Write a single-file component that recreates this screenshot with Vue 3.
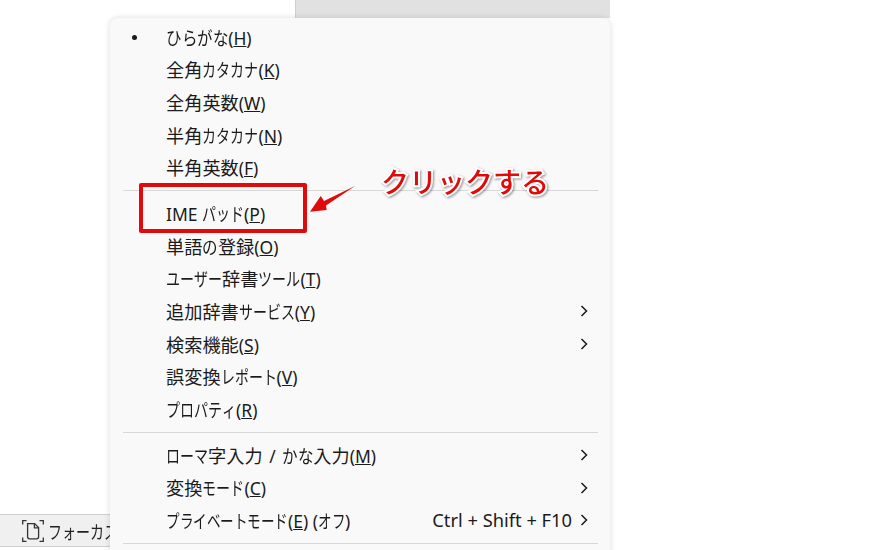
<script setup>
const groups = [
  [
    { label: 'ひらがな', key: 'H', dot: true },
    { label: '全角カタカナ', key: 'K' },
    { label: '全角英数', key: 'W' },
    { label: '半角カタカナ', key: 'N' },
    { label: '半角英数', key: 'F' },
  ],
  [
    { label: 'IME パッド', key: 'P' },
    { label: '単語の登録', key: 'O' },
    { label: 'ユーザー辞書ツール', key: 'T' },
    { label: '追加辞書サービス', key: 'Y', sub: true },
    { label: '検索機能', key: 'S', sub: true },
    { label: '誤変換レポート', key: 'V' },
    { label: 'プロパティ', key: 'R' },
  ],
  [
    { label: 'ローマ字入力 / かな入力', key: 'M', sub: true, cls: 'wide' },
    { label: '変換モード', key: 'C', sub: true },
    { label: 'プライベートモード', key: 'E', tail: ' (オフ)', hint: 'Ctrl + Shift + F10', sub: true, cls: 'tight' },
  ],
]

// The reference font draws kana narrower than kanji, so each kana is its own condensed box.
function tokens(text) {
  return (text.match(/[\u30a0-\u30ff]|[\u3040-\u309f]|[\u4e00-\u9fff]+|[^\u3040-\u30ff\u4e00-\u9fff]+/g) || []).map((t) => {
    let cls = 'lat'
    if (/[\u30a0-\u30ff]/.test(t)) cls = 'kata'
    else if (/[\u3040-\u309f]/.test(t)) cls = 'hira'
    else if (/[\u4e00-\u9fff]/.test(t)) cls = 'kan'
    return { t, cls }
  })
}
</script>

<template>
  <div class="stage">
    <div class="top-band"></div>
    <div class="status-bar">
      <svg class="focus-icon" width="22" height="22" viewBox="0 0 22 22" fill="none" stroke="#333" stroke-width="1.3">
        <path d="M.7 4.5V.7h3.8M17.5.7h3.8v3.8M.7 17.5v3.8h3.8M17.5 21.3h3.8v-3.8" />
        <path d="M5.6 3.6h7l4 4v9.2a2 2 0 0 1-2 2H7.600a2 2 0 0 1-2-2z" />
        <path d="M12.400 3.600v4.200h4.200" />
      </svg>
      <span class="status-text"><span v-for="(s, i) in tokens('フォーカス')" :key="i" :class="s.cls">{{ s.t }}</span></span>
    </div>

    <div class="menu">
      <template v-for="(group, g) in groups" :key="g">
        <div v-for="item in group" :key="item.key" class="row" :class="item.cls">
          <span class="mark"><i v-if="item.dot" class="dot"></i></span>
          <span class="label"><span v-for="(s, i) in tokens(item.label)" :key="i" :class="s.cls">{{ s.t }}</span>(<u>{{ item.key }}</u>)<span v-for="(s, i) in tokens(item.tail || '')" :key="'t' + i" :class="s.cls">{{ s.t }}</span></span>
          <span v-if="item.hint" class="hint">{{ item.hint }}</span>
          <svg v-if="item.sub" class="chev" width="8" height="12" viewBox="0 0 8 12" fill="none" stroke="#1a1a1a" stroke-width="1.5">
            <path d="M1.500 1 6.500 6 1.500 11" />
          </svg>
        </div>
        <div class="sep-wrap"><div class="sep"></div></div>
      </template>
    </div>

    <div class="highlight"></div>
    <svg class="arrow" width="50" height="30" viewBox="0 0 50 30">
      <path d="M1 27.700 11.700 12 15 17 46 2 17 21.500 17.700 26z" fill="#e00a0a" />
    </svg>
    <div class="callout">クリックする</div>
  </div>
</template>

<style scoped>
.stage {
  position: relative;
  width: 879px;
  height: 550px;
  overflow: hidden;
  background: #fff;
  font-family: "Noto Sans", "Noto Sans CJK JP", sans-serif;
}
.top-band {
  position: absolute;
  left: 295px;
  top: 0;
  width: 315px;
  height: 18px;
  background: #e1e1e1;
  border-left: 1px solid #cfcfcf;
  box-sizing: border-box;
}
.status-bar {
  position: absolute;
  left: 0;
  top: 514px;
  width: 112px;
  height: 33px;
  display: flex;
  align-items: center;
  padding-left: 22px;
  box-sizing: border-box;
  overflow: hidden;
  background: #f0f0f0;
  border-top: 1px solid #d0d0d0;
  border-bottom: 1px solid #d0d0d0;
  white-space: nowrap;
  font-size: 17.5px;
}
.focus-icon {
  flex: none;
}
.status-text {
  color: #222;
  margin-left: 4px;
}
.menu {
  position: absolute;
  left: 110px;
  top: 18px;
  width: 500px;
  height: 540px;
  box-sizing: border-box;
  padding: 3px 12px 0 13px;
  background: #f9f9f9;
  border-radius: 8px 8px 0 0;
  box-shadow: 0 0 6px rgba(0, 0, 0, 0.14);
}
.row {
  height: 32.6px;
  display: flex;
  align-items: center;
  font-size: 17.5px;
  color: #1b1b1b;
  white-space: pre;
}
.wide {
  word-spacing: 2px;
}
.kan {
  font-size: 18.2px;
}
.kata,
.hira {
  display: inline-block;
  font-size: 18.5px;
  width: 0.757em;
  transform: scaleX(0.757);
  transform-origin: 0 50%;
}
.hira {
  width: 0.84em;
  transform: scaleX(0.84);
}
.tight .kata {
  width: 0.733em;
  transform: scaleX(0.733);
}
.mark {
  width: 43px;
  flex: none;
  display: flex;
  padding-left: 8.500px;
  box-sizing: border-box;
}
.dot {
  width: 5px;
  height: 5px;
  border-radius: 50%;
  background: #1b1b1b;
}
.label {
  flex: 1;
  margin-top: -1px;
}
.hint {
  font-size: 18.3px;
  margin-top: -1px;
  margin-right: 8px;
}
.chev {
  margin-right: 10px;
}
.sep-wrap {
  height: 13.4px;
  display: flex;
  align-items: center;
}
.sep {
  flex: 1;
  height: 1px;
  background: #d8d8d8;
}
.highlight {
  position: absolute;
  left: 139px;
  top: 183px;
  width: 168px;
  height: 50px;
  box-sizing: border-box;
  border: 4px solid #e00a0a;
  border-radius: 2px;
}
.arrow {
  position: absolute;
  left: 309px;
  top: 184px;
}
.callout {
  position: absolute;
  left: 381px;
  top: 162px;
  font-size: 28px;
  line-height: 40px;
  font-weight: 500;
  color: #e00a0a;
  white-space: nowrap;
  -webkit-text-stroke: 4px #fff;
  paint-order: stroke fill;
  filter: drop-shadow(1px 1px 1px rgba(0, 0, 0, 0.4));
}
</style>
